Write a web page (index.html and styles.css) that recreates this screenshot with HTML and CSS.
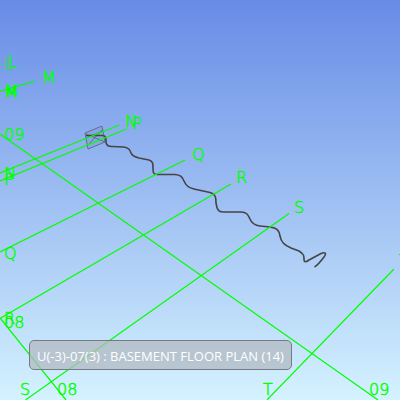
FILE: index.html
```html
<!DOCTYPE html>
<html lang="en">
<head>
<meta charset="utf-8">
<meta name="viewport" content="width=device-width, initial-scale=1">
<title>Basement floor plan</title>
<link rel="stylesheet" href="styles.css">
</head>
<body>
<main class="viewport">
  <svg class="scene" viewBox="0 0 400 400" preserveAspectRatio="xMidYMid slice" role="img" aria-label="Structural grid with cable route">
    <g class="frame">
      <path class="frame-fill" d="M85 133L102 126L105 142L88 149Z"/>
      <path d="M85 133L102 126L105 142L88 149ZM86 138L103 131M86 134L105 142M88 145L103 129"/>
    </g>
    <path class="route" d="M86 135.500H103C106 136 106 138 106 142C106 145 108 146.500 112 146.500L124 147C129 148 130 150 131 153C132 156 135 157 139 158L149 160C153 161 153 164 153 168C153 172 153 174.500 157 174.500H175C181 175 182 177 184 181C186 186 189 188 194 189L210 192.500C216 194 216 198 216 203C217 209 218 212 223 212H241C247 212 248 215 250 219C252 224 255 225.500 260 226L270 227C277 228 279 230 280 236C281 242 284 245 291 248L299 251C304 254 304 256 304 259C304 263 306 262 309 260L321 253.500C325 252 327 253 324 257C321 261 318 265 314.500 267"/>
    <g class="grid">
      <path d="M0 64.500H1M0 91.500L35 81M0 173L119.500 125M0 181L126.500 129M0 252L185 160M0 318.500L231 184M25.500 400L289 213.500M267 400L394 269M0 134L378 400M0 318L66 400M399 254.500H400"/>
    </g>
    <g class="labels">
      <text x="8" y="67">L</text>
      <text class="rim" x="4" y="70">L</text>
      <text x="42" y="83">M</text>
      <text x="4" y="97">M</text>
      <text x="5" y="97">M</text>
      <text x="4" y="140">09</text>
      <text x="125" y="127">N</text>
      <text x="132" y="129">P</text>
      <text x="4" y="179">N</text>
      <text x="4" y="185">P</text>
      <text x="192" y="160">Q</text>
      <text x="4" y="259">Q</text>
      <text x="236" y="183">R</text>
      <text x="4" y="324">R</text>
      <text x="4" y="328">08</text>
      <text x="294" y="213">S</text>
      <text x="20" y="395">S</text>
      <text x="57" y="395">08</text>
      <text x="263" y="395">T</text>
      <text x="369" y="395">09</text>
    </g>
  </svg>
  <div class="caption">U(-3)-07(3) : BASEMENT FLOOR PLAN (14)</div>
</main>
</body>
</html>
```
FILE: styles.css
```css
* {
  box-sizing: border-box;
}

body {
  margin: 0;
}

.viewport {
  position: relative;
  height: 100vh;
  overflow: hidden;
  background: linear-gradient(#688ce6, #d4f2ff);
  font-family: "Open Sans", "Noto Sans", sans-serif;
}

.scene {
  display: block;
  width: 100%;
  height: 100%;
}

.grid {
  fill: none;
  stroke: #00ff00;
  stroke-width: 1.2;
}

.route {
  fill: none;
  stroke: #454545;
  stroke-width: 1.6;
}

.frame {
  fill: none;
  stroke: #626d91;
  stroke-width: 1;
}

.frame-fill {
  fill: #6877a8;
  fill-opacity: 0.15;
  stroke: none;
}

.labels {
  fill: #00ff00;
  stroke: #00ff00;
  stroke-width: 0.5;
  font-family: "DejaVu Sans Light", "DejaVu Sans", "Open Sans", sans-serif;
  font-size: 16px;
  font-weight: 200;
}

.rim {
  opacity: 0.6;
}

.caption {
  position: absolute;
  left: 29px;
  bottom: 30px;
  padding: 3px 7px 0;
  border: 1px solid #747b82;
  border-radius: 5px;
  background: rgba(178, 186, 194, 0.75);
  color: #ffffff;
  font-size: 13px;
  line-height: 25px;
  white-space: nowrap;
}
```
